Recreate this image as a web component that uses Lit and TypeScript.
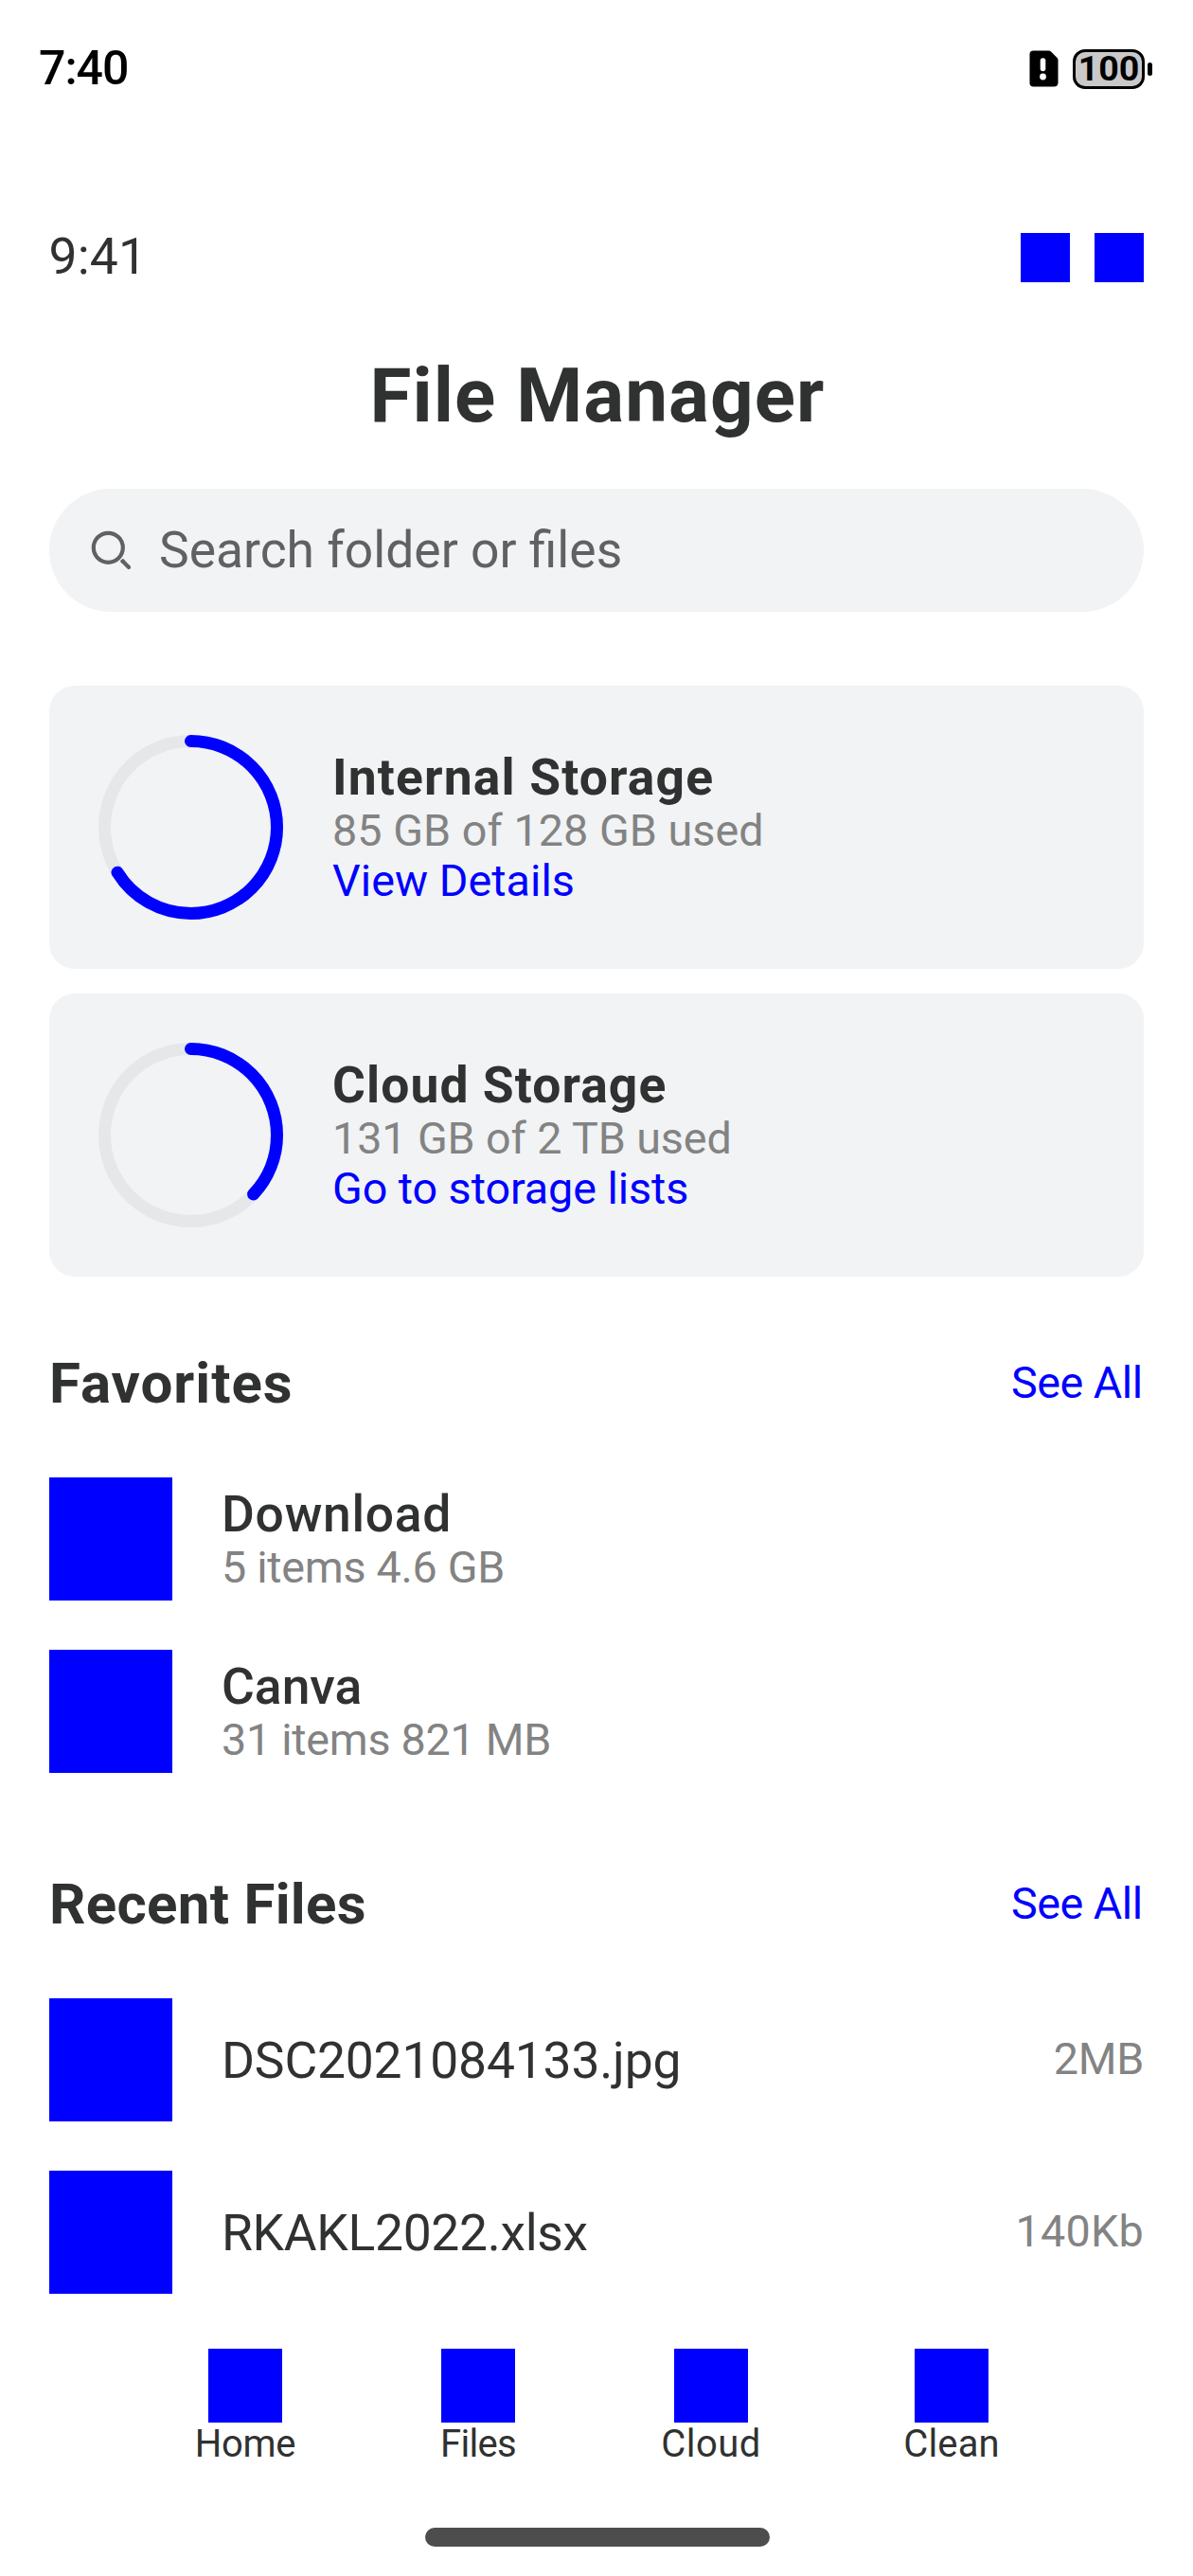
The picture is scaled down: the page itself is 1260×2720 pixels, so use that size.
import { LitElement, html, svg, css } from "lit";
import { customElement } from "lit/decorators.js";
import { styleMap } from "lit/directives/style-map.js";

// Text with its own tracking, in px.
interface Label {
  text: string;
  track: number;
}

interface Storage {
  title: Label;
  usage: Label;
  link: Label;
  degrees: number;
}

const storages: Storage[] = [
  {
    title: { text: "Internal Storage", track: 1.14 },
    usage: { text: "85 GB of 128 GB used", track: 0.05 },
    link: { text: "View Details", track: 0.05 },
    degrees: 238,
  },
  {
    title: { text: "Cloud Storage", track: 1.07 },
    usage: { text: "131 GB of 2 TB used", track: -0.1 },
    link: { text: "Go to storage lists", track: -0.07 },
    degrees: 133.2,
  },
];

const favorites: { name: Label; info: Label }[] = [
  { name: { text: "Download", track: 0.74 }, info: { text: "5 items 4.6 GB", track: -0.28 } },
  { name: { text: "Canva", track: 0 }, info: { text: "31 items 821 MB", track: -0.28 } },
];

const recents: { name: Label; size: Label }[] = [
  { name: { text: "DSC2021084133.jpg", track: -0.18 }, size: { text: "2MB", track: -0.31 } },
  { name: { text: "RKAKL2022.xlsx", track: -0.31 }, size: { text: "140Kb", track: 0.24 } },
];

const tabs: Label[] = [
  { text: "Home", track: -0.33 },
  { text: "Files", track: -0.66 },
  { text: "Cloud", track: 0.5 },
  { text: "Clean", track: 0.13 },
];

const label = (cls: string, l: Label) =>
  html`<div class=${cls} style=${styleMap({ letterSpacing: `${l.track}px` })}>${l.text}</div>`;

const ring = (degrees: number) => {
  const r = 91;
  const length = 2 * Math.PI * r;
  return html`<svg class="ring" viewBox="0 0 195 195">
    <circle cx="97.5" cy="97.5" r=${r} fill="none" stroke="#e6e7e9" stroke-width="13" />
    ${svg`<circle cx="97.5" cy="97.5" r=${r} fill="none" stroke="#0000ff" stroke-width="13"
      stroke-linecap="round" transform="rotate(-90 97.5 97.5)"
      stroke-dasharray="${(length * degrees) / 360} ${length}" />`}
  </svg>`;
};

@customElement("app-root")
export class AppRoot extends LitElement {
  static styles = css`
    :host {
      display: block;
      width: 1260px;
      height: 2720px;
      overflow: hidden;
      background: #fff;
      color: #303131;
      font-family: Roboto, "Liberation Sans", sans-serif;
      font-size: 53.4px;
      line-height: 61px;
      white-space: nowrap;
    }
    .page {
      display: flex;
      flex-direction: column;
      height: 2720px;
    }
    .status {
      display: flex;
      align-items: center;
      height: 146px;
      padding: 0 43px 0 41px;
      box-sizing: border-box;
      color: #000;
    }
    .clock {
      flex: 1;
      padding-bottom: 2px;
      font-size: 50px;
      font-weight: 500;
      letter-spacing: -1px;
    }
    .sim {
      width: 31px;
      height: 39px;
      margin: 0 15px 2px 0;
      display: block;
    }
    .battery {
      display: flex;
      justify-content: center;
      width: 76px;
      height: 42px;
      box-sizing: border-box;
      border: 3px solid #000;
      border-radius: 13px;
      background: #c9c9c9;
      font-size: 37.6px;
      font-weight: 700;
      line-height: 35px;
    }
    .nub {
      width: 5px;
      height: 14px;
      margin-left: 3px;
      border-radius: 2.5px;
      background: #000;
    }
    .top {
      display: flex;
      align-items: center;
      height: 61px;
      margin: 95px 52px 0 51.5px;
    }
    .time {
      flex: 1;
      padding-bottom: 2px;
      letter-spacing: 0.2px;
    }
    .actions {
      display: flex;
      gap: 26px;
      padding-top: 1px;
    }
    .action {
      width: 52px;
      height: 52px;
      background: #00f;
    }
    .title {
      margin-top: 69px;
      padding-left: 2px;
      height: 94px;
      line-height: 94px;
      font-size: 80px;
      font-weight: 700;
      letter-spacing: 1.06px;
      text-align: center;
    }
    .search {
      display: flex;
      align-items: center;
      height: 130px;
      box-sizing: border-box;
      margin: 51px 52px 0;
      padding: 0 43px 2px;
      border-radius: 65px;
      background: #f1f3f5;
      color: #606162;
    }
    .lens {
      width: 46px;
      height: 46px;
      margin-right: 27px;
      display: block;
    }
    .cards {
      display: flex;
      flex-direction: column;
      gap: 26px;
      margin: 78px 52px 0;
    }
    .card {
      display: flex;
      align-items: center;
      gap: 52px;
      height: 299px;
      box-sizing: border-box;
      padding: 0 52px;
      border-radius: 27px;
      background: #f1f3f5;
    }
    .ring {
      width: 195px;
      height: 195px;
      display: block;
    }
    .strong {
      font-weight: 700;
    }
    .medium {
      font-weight: 500;
    }
    .muted,
    .link {
      font-size: 46.7px;
      line-height: 53.5px;
    }
    .muted {
      color: #838383;
    }
    .link {
      color: #00f;
    }
    .see {
      padding-right: 1.5px;
      letter-spacing: -0.5px;
    }
    .section {
      display: flex;
      flex-direction: column;
      gap: 52px;
      margin: 78px 52px 0;
    }
    .section + .section {
      margin-top: 104px;
    }
    .head {
      display: flex;
      align-items: center;
      justify-content: space-between;
      height: 69px;
      margin-bottom: 13px;
    }
    .heading {
      font-size: 60px;
      font-weight: 700;
      padding-bottom: 1px;
    }
    .row {
      display: flex;
      align-items: center;
      height: 130px;
    }
    .thumb {
      width: 130px;
      height: 130px;
      margin-right: 52px;
      background: #00f;
    }
    .grow {
      flex: 1;
    }
    .tabs {
      display: grid;
      grid-template-columns: 104px 84px 104px 100px;
      column-gap: 152px;
      margin: 58px 0 0 207px;
    }
    .tab {
      display: flex;
      flex-direction: column;
      align-items: center;
    }
    .glyph {
      width: 78px;
      height: 78px;
      background: #00f;
    }
    .caption {
      font-size: 40px;
      line-height: 46px;
    }
    .homebar {
      width: 364px;
      height: 20px;
      margin: auto 0 31px 449px;
      border-radius: 10px;
      background: #4d4d4d;
    }
  `;

  private section(heading: Label, rows: unknown) {
    return html`<section class="section">
      <div class="head">
        ${label("heading", heading)}
        <div class="link see">See All</div>
      </div>
      ${rows}
    </section>`;
  }

  render() {
    return html`<div class="page">
      <div class="status">
        <div class="clock">7:40</div>
        <svg class="sim" viewBox="0 0 31 39">
          <path d="M4.5 0.5H20.5Q22 0.5 23 1.5L29.5 8Q30.5 9 30.5 10.5V34Q30.5 38.5 26 38.5H4.5Q0.5 38.5 0.5 34.5V4.5Q0.5 0.5 4.5 0.5Z" />
          <rect x="11.7" y="8.3" width="5.6" height="14" rx="2.8" fill="#fff" />
          <circle cx="14.5" cy="28" r="3.4" fill="#fff" />
        </svg>
        <div class="battery">100</div>
        <div class="nub"></div>
      </div>

      <div class="top">
        <div class="time">9:41</div>
        <div class="actions">
          <div class="action"></div>
          <div class="action"></div>
        </div>
      </div>

      <div class="title">File Manager</div>

      <div class="search">
        <svg class="lens" viewBox="0 0 46 46" fill="none" stroke="#606162" stroke-width="4.2">
          <circle cx="19.3" cy="21.3" r="15.5" />
          <path d="M33.3 34.3L35 36" />
          <path d="M34.8 35.8L41 42" stroke-linecap="round" />
        </svg>
        <div>Search folder or files</div>
      </div>

      <div class="cards">
        ${storages.map(
          (s) => html`<div class="card">
            ${ring(s.degrees)}
            <div>${label("strong", s.title)}${label("muted", s.usage)}${label("link", s.link)}</div>
          </div>`
        )}
      </div>

      ${this.section(
        { text: "Favorites", track: 0.98 },
        favorites.map(
          (f) => html`<div class="row">
            <div class="thumb"></div>
            <div>${label("medium", f.name)}${label("muted", f.info)}</div>
          </div>`
        )
      )}
      ${this.section(
        { text: "Recent Files", track: 0.3 },
        recents.map(
          (f) => html`<div class="row">
            <div class="thumb"></div>
            ${label("grow", f.name)}${label("muted", f.size)}
          </div>`
        )
      )}

      <nav class="tabs">
        ${tabs.map(
          (t) => html`<div class="tab">
            <div class="glyph"></div>
            ${label("caption", t)}
          </div>`
        )}
      </nav>

      <div class="homebar"></div>
    </div>`;
  }
}
